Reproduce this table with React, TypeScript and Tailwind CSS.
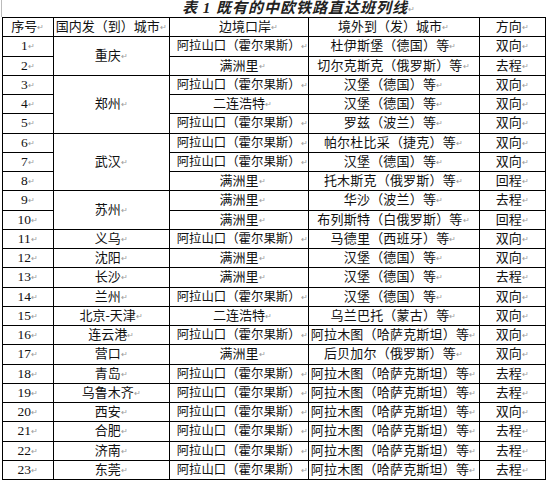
import React from "react";

type Row = [string, string | null, number, string, string, string];

const rows: Row[] = [
  ["1", "重庆", 2, "阿拉山口（霍尔果斯）", "杜伊斯堡（德国）等", "双向"],
  ["2", null, 0, "满洲里", "切尔克斯克（俄罗斯）等", "去程"],
  ["3", "郑州", 3, "阿拉山口（霍尔果斯）", "汉堡（德国）等", "双向"],
  ["4", null, 0, "二连浩特", "汉堡（德国）等", "双向"],
  ["5", null, 0, "阿拉山口（霍尔果斯）", "罗兹（波兰）等", "双向"],
  ["6", "武汉", 3, "阿拉山口（霍尔果斯）", "帕尔杜比采（捷克）等", "双向"],
  ["7", null, 0, "阿拉山口（霍尔果斯）", "汉堡（德国）等", "双向"],
  ["8", null, 0, "满洲里", "托木斯克（俄罗斯）等", "回程"],
  ["9", "苏州", 2, "满洲里", "华沙（波兰）等", "去程"],
  ["10", null, 0, "满洲里", "布列斯特（白俄罗斯）等", "回程"],
  ["11", "义乌", 1, "阿拉山口（霍尔果斯）", "马德里（西班牙）等", "双向"],
  ["12", "沈阳", 1, "满洲里", "汉堡（德国）等", "双向"],
  ["13", "长沙", 1, "满洲里", "汉堡（德国）等", "去程"],
  ["14", "兰州", 1, "阿拉山口（霍尔果斯）", "汉堡（德国）等", "双向"],
  ["15", "北京-天津", 1, "二连浩特", "乌兰巴托（蒙古）等", "双向"],
  ["16", "连云港", 1, "阿拉山口（霍尔果斯）", "阿拉木图（哈萨克斯坦）等", "双向"],
  ["17", "营口", 1, "满洲里", "后贝加尔（俄罗斯）等", "双向"],
  ["18", "青岛", 1, "阿拉山口（霍尔果斯）", "阿拉木图（哈萨克斯坦）等", "去程"],
  ["19", "乌鲁木齐", 1, "阿拉山口（霍尔果斯）", "阿拉木图（哈萨克斯坦）等", "去程"],
  ["20", "西安", 1, "阿拉山口（霍尔果斯）", "阿拉木图（哈萨克斯坦）等", "双向"],
  ["21", "合肥", 1, "阿拉山口（霍尔果斯）", "阿拉木图（哈萨克斯坦）等", "去程"],
  ["22", "济南", 1, "阿拉山口（霍尔果斯）", "阿拉木图（哈萨克斯坦）等", "去程"],
  ["23", "东莞", 1, "阿拉山口（霍尔果斯）", "阿拉木图（哈萨克斯坦）等", "去程"],
];

const Mark = () => (
  <span className="text-[8px] text-[#9a9a9a] align-middle leading-none">↵</span>
);

const cell =
  "border border-black p-0 h-[19.25px] leading-[18px] whitespace-nowrap overflow-hidden";

export default function App() {
  return (
    <div className="w-[546px] h-[481px] bg-white text-[#111] overflow-hidden">
      <div className="relative h-[17px] flex items-center pl-[180px] border-l border-[#bbb] ml-[1px]">
        <span
          className="text-[15px] font-bold italic tracking-[1px] leading-none text-[#222]"
          style={{ fontFamily: '"Liberation Serif", "Noto Sans CJK SC", serif' }}
        >
          表 1 既有的中欧铁路直达班列线
        </span>
        <Mark />
      </div>
      <table
        className="ml-[2px] border-collapse table-fixed text-[13px]"
        style={{ fontFamily: '"Liberation Serif", "Noto Sans CJK SC", serif' }}
      >
        <colgroup>
          <col className="w-[51px]" />
          <col className="w-[116px]" />
          <col className="w-[135px]" />
          <col className="w-[171px]" />
          <col className="w-[67px]" />
        </colgroup>
        <thead>
          <tr>
            <th className={`${cell} font-normal text-center`}>序号<Mark /></th>
            <th className={`${cell} font-normal text-center`}>国内发（到）城市<Mark /></th>
            <th className={`${cell} font-normal text-center pl-[20px]`}>边境口岸<Mark /></th>
            <th className={`${cell} font-normal text-center`}>境外到（发）城市<Mark /></th>
            <th className={`${cell} font-normal text-center`}>方向<Mark /></th>
          </tr>
        </thead>
        <tbody>
          {rows.map((r) => {
            const long = r[3].length > 5;
            return (
              <tr key={r[0]}>
                <td className={`${cell} text-center text-[13.5px]`}>{r[0]}<Mark /></td>
                {r[1] !== null && (
                  <td className={`${cell} text-center align-middle`} rowSpan={r[2]}>
                    {r[1]}<Mark />
                  </td>
                )}
                <td
                  className={`${cell} ${long ? "text-left pl-[7px] text-[12.4px]" : "text-center pl-[8px]"}`}
                >
                  {r[3]}<Mark />
                </td>
                <td className={`${cell} text-center tracking-[0.2px]`}>{r[4]}<Mark /></td>
                <td className={`${cell} text-center`}>{r[5]}<Mark /></td>
              </tr>
            );
          })}
        </tbody>
      </table>
    </div>
  );
}
